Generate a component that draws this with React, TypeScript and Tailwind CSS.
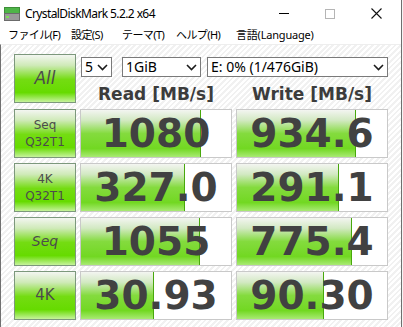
import React from "react";

const rows = [
  { label: ["Seq", "Q32T1"], read: "1080", readW: 120, write: "934.6", writeW: 119 },
  { label: ["4K", "Q32T1"], read: "327.0", readW: 104, write: "291.1", writeW: 102 },
  { label: ["Seq"], read: "1055", readW: 119, write: "775.4", writeW: 115 },
  { label: ["4K"], read: "30.93", readW: 73, write: "90.30", writeW: 87 },
];

const uiFont = { fontFamily: '"Noto Sans", "Noto Sans CJK JP", sans-serif' };

function Chevron() {
  return (
    <svg width="11" height="7" viewBox="0 0 11 7" className="shrink-0">
      <polyline points="1,1 5.5,5.5 10,1" fill="none" stroke="#1b1b1b" strokeWidth="1.6" />
    </svg>
  );
}

function Select({ text, w }: { text: string; w: string }) {
  return (
    <div
      className={`${w} h-[20px] flex items-center justify-between border border-[#7a7a7a] bg-white pl-[3px] pr-[3px] text-[14px] text-black leading-none`}
      style={uiFont}
    >
      <span>{text}</span>
      <Chevron />
    </div>
  );
}

function GreenButton({ lines, big }: { lines: string[]; big?: boolean }) {
  return (
    <div className="w-[62px] h-[49px] border border-[#7c987c] bg-[linear-gradient(180deg,#f3f6f1_0%,#cfeab8_22%,#74dc12_52%,#66db00_80%,#c6f39c_100%)] flex flex-col items-center justify-center text-[#4c4c4c] font-['DejaVu_Sans',sans-serif]">
      {lines.length === 2 ? (
        <>
          <span className="text-[12px] leading-[17px]">{lines[0]}</span>
          <span className="text-[12px] leading-[17px]">{lines[1]}</span>
        </>
      ) : (
        <span className={big ? "text-[17px] italic" : lines[0] === "Seq" ? "text-[14px] italic" : "text-[15px]"}>{lines[0]}</span>
      )}
    </div>
  );
}

function Meter({ value, fill }: { value: string; fill: number }) {
  return (
    <div className="relative w-[152px] h-[49px] border border-[#c9c9c9] bg-white overflow-hidden">
      <div
        className="absolute left-0 top-0 bottom-0 border-r border-[#48a80c] bg-[linear-gradient(180deg,#f3f5f1_0%,#d2e9c2_22%,#84db3e_50%,#72d822_82%,#a9ea74_100%)]"
        style={{ width: fill }}
      />
      <div className="relative h-full flex items-center justify-center text-[39px] font-bold text-[#414141] font-['DejaVu_Sans',sans-serif] leading-none">
        {value}
      </div>
    </div>
  );
}

export default function App() {
  return (
    <div className="w-[403px] h-[327px] overflow-hidden bg-[#f4f4f4]">
      <div className="w-[402px] h-[327px] flex flex-col border-r border-[#6f6f6f] bg-white">
        {/* title bar */}
        <div className="h-[27px] flex items-center relative" style={uiFont}>
          <svg width="16" height="14" viewBox="0 0 16 14" className="ml-[4px]">
            <rect x="0.5" y="0.5" width="15" height="6" fill="#4fb548" stroke="#3d8f38" />
            <rect x="0.5" y="6.5" width="15" height="7" fill="#9a9a9a" stroke="#6b6b6b" />
            <rect x="2" y="9" width="3" height="2" fill="#7de05a" />
          </svg>
          <span className="ml-[5px] text-[12px] text-black tracking-[-0.6px]">CrystalDiskMark 5.2.2 x64</span>
          <div className="ml-auto flex items-center h-full">
            <div className="w-[46px] h-full flex items-center justify-center">
              <div className="w-[10px] h-px bg-black" />
            </div>
            <div className="w-[46px] h-full flex items-center justify-center">
              <div className="w-[10px] h-[10px] border border-[#b5b5b5]" />
            </div>
            <div className="w-[46px] h-full flex items-center justify-center mr-[2px]">
              <svg width="11" height="11" viewBox="0 0 11 11">
                <path d="M0.5 0.5 L10.5 10.5 M10.5 0.5 L0.5 10.5" stroke="#111" strokeWidth="1.1" />
              </svg>
            </div>
          </div>
        </div>

        {/* menu bar */}
        <div className="h-[17px] flex items-center text-[11px] text-black tracking-[-0.6px] whitespace-nowrap" style={uiFont}>
          <span className="ml-[8px] w-[63px]">ファイル(F)</span>
          <span className="w-[51px]">設定(S)</span>
          <span className="w-[54px]">テーマ(T)</span>
          <span className="w-[60px]">ヘルプ(H)</span>
          <span className="tracking-[-0.2px]">言語(Language)</span>
        </div>

        {/* content */}
        <div className="flex-1 border-l border-t border-l-[#707070] border-t-[#eeeeee] bg-[repeating-linear-gradient(135deg,#ffffff_0px,#ffffff_2px,#f1f1f1_2px,#f1f1f1_4px)] pl-[13px] pt-[9px]">
          <div className="grid grid-cols-[62px_152px_152px] gap-x-[4px] gap-y-[5px]">
            <GreenButton lines={["All"]} big />
            <div className="col-span-2 flex flex-col">
              <div className="flex items-center mt-[3px] ml-px">
                <Select text="5" w="w-[31px]" />
                <div className="w-[10px]" />
                <Select text="1GiB" w="w-[79px]" />
                <div className="w-[6px]" />
                <Select text="E: 0% (1/476GiB)" w="w-[181px]" />
              </div>
              <div className="flex gap-[4px] mt-[7px] text-[17px] font-bold text-[#3c3c3c] font-['DejaVu_Sans',sans-serif] leading-[20px]">
                <div className="w-[152px] text-center">Read [MB/s]</div>
                <div className="w-[152px] text-center">Write [MB/s]</div>
              </div>
            </div>
            {rows.map((r) => (
              <React.Fragment key={r.read}>
                <GreenButton lines={r.label} />
                <Meter value={r.read} fill={r.readW} />
                <Meter value={r.write} fill={r.writeW} />
              </React.Fragment>
            ))}
          </div>
        </div>
      </div>
    </div>
  );
}
